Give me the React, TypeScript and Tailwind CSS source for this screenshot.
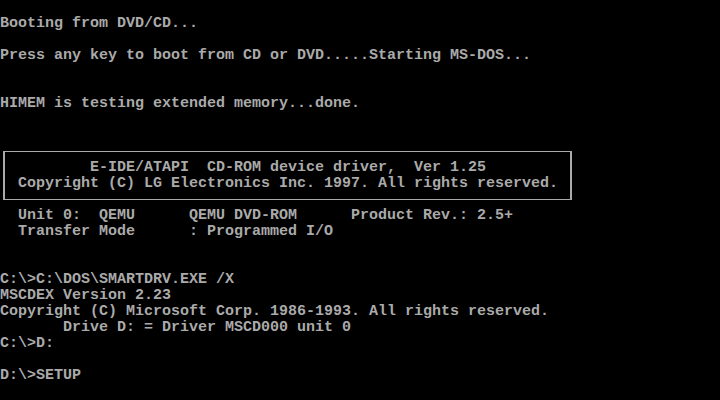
export default function App() {
  const line = "h-4 whitespace-pre";

  return (
    <main className="w-[720px] h-[400px] overflow-hidden bg-black text-[#aaaaaa] font-['Liberation_Mono',monospace] text-[15px] leading-4 font-bold">

      <div className={line}> </div>
      <div className={line}>Booting from DVD/CD...</div>
      <div className={line}> </div>
      <div className={line}>Press any key to boot from CD or DVD.....Starting MS-DOS...</div>
      <div className={line}> </div>
      <div className={line}> </div>
      <div className={line}>HIMEM is testing extended memory...done.</div>
      <div className={line}> </div>
      <div className={line}> </div>

      {/* driver banner box */}
      <div className="h-16 pt-[7px] pl-[3px]">
        <div className="w-[569px] h-[49px] border-x-2 border-y border-[#aaaaaa] pt-[8px] pl-[13px]">
          <div className={line}>{"        E-IDE/ATAPI  CD-ROM device driver,  Ver 1.25"}</div>
          <div className={line}>Copyright (C) LG Electronics Inc. 1997. All rights reserved.</div>
        </div>
      </div>

      <div className={line}>{"  Unit 0:  QEMU      QEMU DVD-ROM      Product Rev.: 2.5+"}</div>
      <div className={line}>{"  Transfer Mode      : Programmed I/O"}</div>
      <div className={line}> </div>
      <div className={line}> </div>
      <div className={line}>{"C:\\>C:\\DOS\\SMARTDRV.EXE /X"}</div>
      <div className={line}>MSCDEX Version 2.23</div>
      <div className={line}>Copyright (C) Microsoft Corp. 1986-1993. All rights reserved.</div>
      <div className={line}>{"       Drive D: = Driver MSCD000 unit 0"}</div>
      <div className={line}>{"C:\\>D:"}</div>
      <div className={line}> </div>
      <div className={line}>{"D:\\>SETUP"}</div>

    </main>
  );
}
